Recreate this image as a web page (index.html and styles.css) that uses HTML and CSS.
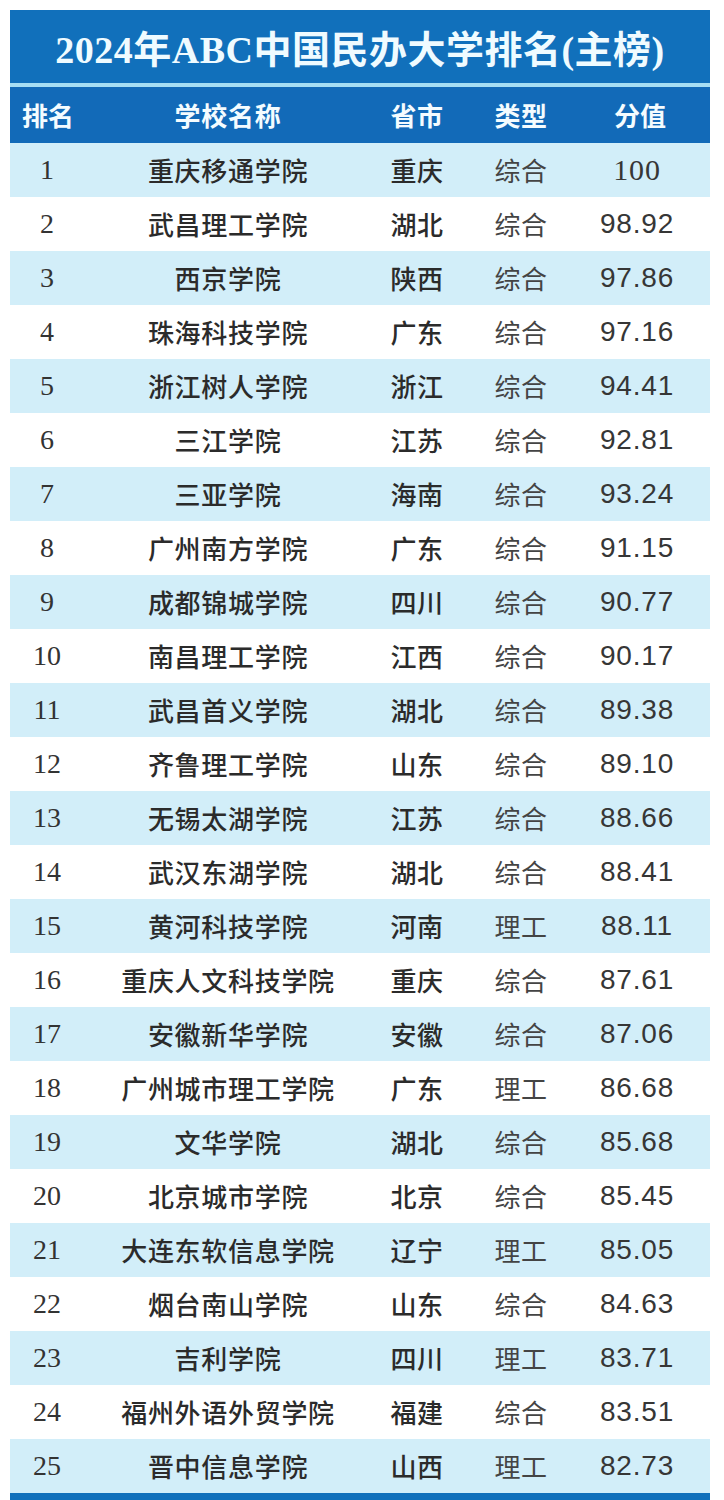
FILE: index.html
```html
<!DOCTYPE html>
<html lang="zh-CN">
<head>
<meta charset="utf-8">
<title>2024年ABC中国民办大学排名(主榜)</title>
<link rel="stylesheet" href="styles.css">
</head>
<body>
<div class="board">
  <div class="title">2024年ABC中国民办大学排名(主榜)</div>
  <div class="sep"></div>
  <div class="row head">
    <div class="c rank">排名</div>
    <div class="c name">学校名称</div>
    <div class="c prov">省市</div>
    <div class="c type">类型</div>
    <div class="c score">分值</div>
  </div>
  <div class="row odd"><div class="c rank">1</div><div class="c name">重庆移通学院</div><div class="c prov">重庆</div><div class="c type">综合</div><div class="c score serif">100</div></div>
  <div class="row"><div class="c rank">2</div><div class="c name">武昌理工学院</div><div class="c prov">湖北</div><div class="c type">综合</div><div class="c score">98.92</div></div>
  <div class="row odd"><div class="c rank">3</div><div class="c name">西京学院</div><div class="c prov">陕西</div><div class="c type">综合</div><div class="c score">97.86</div></div>
  <div class="row"><div class="c rank">4</div><div class="c name">珠海科技学院</div><div class="c prov">广东</div><div class="c type">综合</div><div class="c score">97.16</div></div>
  <div class="row odd"><div class="c rank">5</div><div class="c name">浙江树人学院</div><div class="c prov">浙江</div><div class="c type">综合</div><div class="c score">94.41</div></div>
  <div class="row"><div class="c rank">6</div><div class="c name">三江学院</div><div class="c prov">江苏</div><div class="c type">综合</div><div class="c score">92.81</div></div>
  <div class="row odd"><div class="c rank">7</div><div class="c name">三亚学院</div><div class="c prov">海南</div><div class="c type">综合</div><div class="c score">93.24</div></div>
  <div class="row"><div class="c rank">8</div><div class="c name">广州南方学院</div><div class="c prov">广东</div><div class="c type">综合</div><div class="c score">91.15</div></div>
  <div class="row odd"><div class="c rank">9</div><div class="c name">成都锦城学院</div><div class="c prov">四川</div><div class="c type">综合</div><div class="c score">90.77</div></div>
  <div class="row"><div class="c rank">10</div><div class="c name">南昌理工学院</div><div class="c prov">江西</div><div class="c type">综合</div><div class="c score">90.17</div></div>
  <div class="row odd"><div class="c rank">11</div><div class="c name">武昌首义学院</div><div class="c prov">湖北</div><div class="c type">综合</div><div class="c score">89.38</div></div>
  <div class="row"><div class="c rank">12</div><div class="c name">齐鲁理工学院</div><div class="c prov">山东</div><div class="c type">综合</div><div class="c score">89.10</div></div>
  <div class="row odd"><div class="c rank">13</div><div class="c name">无锡太湖学院</div><div class="c prov">江苏</div><div class="c type">综合</div><div class="c score">88.66</div></div>
  <div class="row"><div class="c rank">14</div><div class="c name">武汉东湖学院</div><div class="c prov">湖北</div><div class="c type">综合</div><div class="c score">88.41</div></div>
  <div class="row odd"><div class="c rank">15</div><div class="c name">黄河科技学院</div><div class="c prov">河南</div><div class="c type">理工</div><div class="c score">88.11</div></div>
  <div class="row"><div class="c rank">16</div><div class="c name">重庆人文科技学院</div><div class="c prov">重庆</div><div class="c type">综合</div><div class="c score">87.61</div></div>
  <div class="row odd"><div class="c rank">17</div><div class="c name">安徽新华学院</div><div class="c prov">安徽</div><div class="c type">综合</div><div class="c score">87.06</div></div>
  <div class="row"><div class="c rank">18</div><div class="c name">广州城市理工学院</div><div class="c prov">广东</div><div class="c type">理工</div><div class="c score">86.68</div></div>
  <div class="row odd"><div class="c rank">19</div><div class="c name">文华学院</div><div class="c prov">湖北</div><div class="c type">综合</div><div class="c score">85.68</div></div>
  <div class="row"><div class="c rank">20</div><div class="c name">北京城市学院</div><div class="c prov">北京</div><div class="c type">综合</div><div class="c score">85.45</div></div>
  <div class="row odd"><div class="c rank">21</div><div class="c name">大连东软信息学院</div><div class="c prov">辽宁</div><div class="c type">理工</div><div class="c score">85.05</div></div>
  <div class="row"><div class="c rank">22</div><div class="c name">烟台南山学院</div><div class="c prov">山东</div><div class="c type">综合</div><div class="c score">84.63</div></div>
  <div class="row odd"><div class="c rank">23</div><div class="c name">吉利学院</div><div class="c prov">四川</div><div class="c type">理工</div><div class="c score">83.71</div></div>
  <div class="row"><div class="c rank">24</div><div class="c name">福州外语外贸学院</div><div class="c prov">福建</div><div class="c type">综合</div><div class="c score">83.51</div></div>
  <div class="row odd"><div class="c rank">25</div><div class="c name">晋中信息学院</div><div class="c prov">山西</div><div class="c type">理工</div><div class="c score">82.73</div></div>
  <div class="foot"></div>
</div>
</body>
</html>
```

FILE: styles.css
```css
html, body {
  margin: 0;
  padding: 0;
  background: #ffffff;
}
body {
  padding: 10px 14px 0 10px;
  font-family: "Noto Sans CJK SC", "Noto Sans", sans-serif;
}
.board {
  width: 700px;
}
.title {
  height: 73px;
  background: #1170bb;
  color: #effbff;
  font-family: "Liberation Serif", "Noto Sans CJK SC", serif;
  font-size: 38px;
  font-weight: 700;
  display: flex;
  align-items: center;
  justify-content: center;
  letter-spacing: 0.5px;
}
.sep {
  height: 4px;
  background: #a6def4;
}
.row {
  display: grid;
  grid-template-columns: 100px 236px 142px 66px 156px;
  height: 54px;
  align-items: center;
  background: #ffffff;
  color: #2b2b2b;
  font-size: 26px;
}
.row.odd {
  background: #d2eef9;
}
.row.head {
  height: 56px;
  background: #126ab8;
  color: #f4fcff;
  font-weight: 700;
}
.c {
  text-align: center;
  white-space: nowrap;
  line-height: 1;
}
.rank {
  text-align: center;
  padding-right: 26px;
  font-family: "Liberation Serif", serif;
  font-size: 28px;
  color: #333333;
}
.head .rank {
  text-align: left;
  padding-right: 0;
  padding-left: 12px;
  font-family: "Noto Sans CJK SC", sans-serif;
  font-size: 26px;
  color: #f4fcff;
}
.name {
  font-weight: 500;
  letter-spacing: 0.7px;
}
.prov {
  font-weight: 500;
  letter-spacing: 0.5px;
}
.type {
  font-weight: 400;
  color: #444444;
  letter-spacing: 0.5px;
}
.head .type, .head .prov, .head .name {
  color: #f4fcff;
  font-weight: 700;
}
.score {
  padding-left: 10px;
  font-family: "Liberation Sans", sans-serif;
  font-size: 28px;
  color: #363636;
  letter-spacing: 0.8px;
}
.score.serif {
  font-family: "Liberation Serif", serif;
  font-size: 30px;
}
.head .score {
  font-family: "Noto Sans CJK SC", sans-serif;
  font-size: 26px;
  letter-spacing: 0;
  color: #f4fcff;
  padding-left: 16px;
}
.foot {
  height: 8px;
  background: #1170bb;
}
```
